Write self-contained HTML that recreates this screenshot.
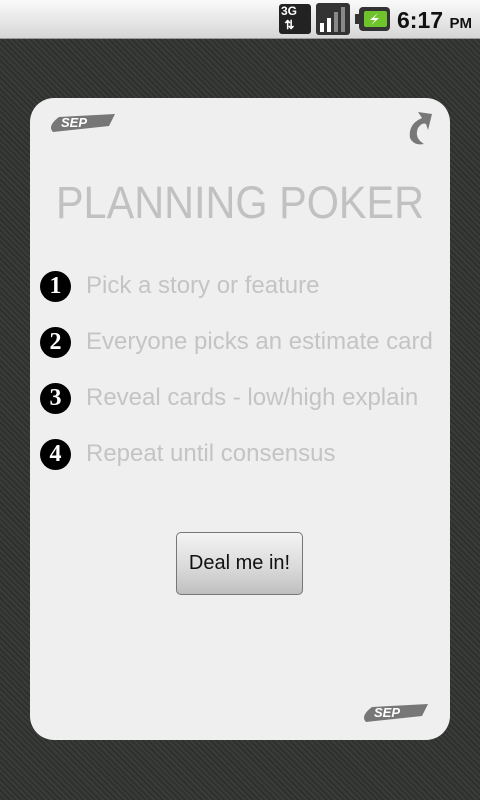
<!DOCTYPE html>
<html><head><style>
body{margin:0;width:480px;height:800px;overflow:hidden;background:#333634;font-family:"Liberation Sans",sans-serif;position:relative}
.bg{position:absolute;top:38px;left:0;width:480px;height:762px;background:repeating-linear-gradient(45deg,#3a3c3a 0 2px,#2e302e 2px 4px)}
.sb{position:absolute;top:0;left:0;width:480px;height:38px;background:linear-gradient(#fafafa,#d6d6d6);border-bottom:1px solid #999}
.card{position:absolute;left:30px;top:98px;width:420px;height:642px;background:#efefef;border-radius:24px}
h1{position:absolute;left:0;width:420px;top:79px;margin:0;text-align:center;font-weight:normal;font-size:45px;color:#c1c1c1;transform:scaleX(0.92)}
.item{position:absolute;left:10px;font-size:24px;color:#c4c4c4;height:32px;line-height:32px}
.num{display:inline-block;width:31px;height:31px;border-radius:50%;background:#000;color:#fff;font-family:"Liberation Serif",serif;font-weight:bold;font-size:24px;text-align:center;line-height:31px;vertical-align:middle;margin-right:15px}
.btn{position:absolute;left:146px;top:434px;width:125px;height:61px;border:1px solid #777;border-radius:5px;background:linear-gradient(#f4f4f4,#d8d8d8 60%,#bfbfbf);font-size:20px;text-align:center;line-height:61px;color:#111}
</style></head><body>
<div class="bg"></div>
<div class="sb">
<div style="position:absolute;left:279px;top:4px;width:32px;height:30px;background:#222;border-radius:3px;color:#fff;font-weight:bold;font-size:12px;line-height:14px;padding-left:2px;box-sizing:border-box">3G<br>&nbsp;⇅</div>
<svg style="position:absolute;left:316px;top:3px" width="34" height="32"><rect width="34" height="32" rx="3" fill="#333"/><rect x="4" y="20" width="4" height="9" fill="#fff"/><rect x="11" y="15" width="4" height="14" fill="#fff"/><rect x="18" y="9" width="4" height="20" fill="#888"/><rect x="25" y="4" width="4" height="25" fill="#888"/></svg>
<svg style="position:absolute;left:355px;top:6px" width="36" height="26"><rect x="0" y="8" width="5" height="10" fill="#333"/><rect x="4" y="1" width="31" height="24" rx="4" fill="#333"/><rect x="9" y="5" width="23" height="16" rx="2" fill="#6ec42a"/><path d="M23 7l-8 7h5l-4 5 8-7h-5z" fill="#fff"/></svg>
<div style="position:absolute;left:397px;top:7px;font-weight:bold;font-size:23px;color:#111">6:17 <span style="font-size:15px">PM</span></div>
</div>
<div class="card">
<svg style="position:absolute;left:17px;top:14px" width="72" height="22"><path d="M12 5 L68 2 L62 14 L6 20 Q0 14 12 5Z" fill="#777"/><text x="14" y="15" font-size="13" font-weight="bold" font-style="italic" fill="#fff" font-family="Liberation Sans">SEP</text></svg>
<svg style="position:absolute;left:374px;top:12px" width="30" height="36"><path d="M28 4 L14 2 L18 8 Q4 14 6 28 Q10 36 20 34 Q10 28 14 18 Q18 12 22 14 L24 20Z" fill="#777"/></svg>
<h1>PLANNING POKER</h1>
<div class="item" style="top:172px"><span class="num">1</span>Pick a story or feature</div>
<div class="item" style="top:228px"><span class="num">2</span>Everyone picks an estimate card</div>
<div class="item" style="top:284px"><span class="num">3</span>Reveal cards - low/high explain</div>
<div class="item" style="top:340px"><span class="num">4</span>Repeat until consensus</div>
<div class="btn">Deal me in!</div>
<svg style="position:absolute;left:330px;top:604px" width="72" height="22"><path d="M12 5 L68 2 L62 14 L6 20 Q0 14 12 5Z" fill="#777"/><text x="14" y="15" font-size="13" font-weight="bold" font-style="italic" fill="#fff" font-family="Liberation Sans">SEP</text></svg>
</div>
</body></html>
